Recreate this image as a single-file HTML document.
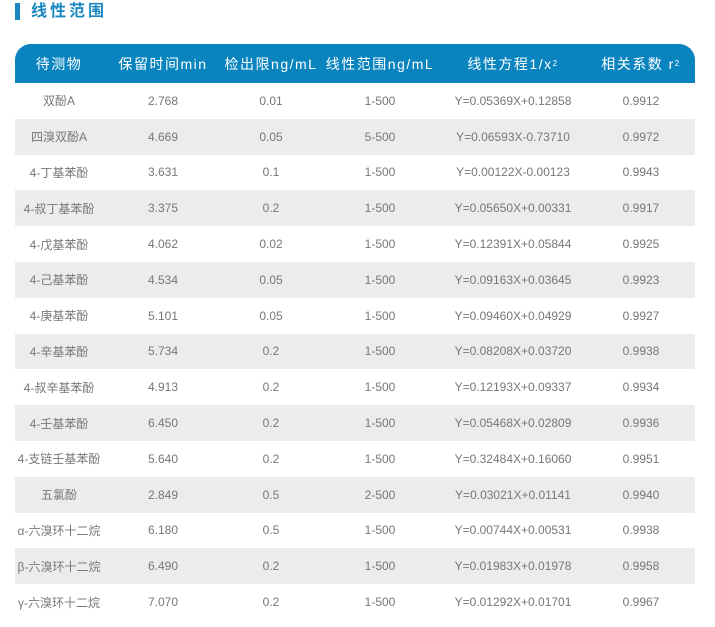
<!DOCTYPE html>
<html><head><meta charset="utf-8"><style>
body{margin:0;background:#fff;width:715px;height:627px;overflow:hidden;font-family:"Liberation Sans","Noto Sans CJK SC",sans-serif;}
.bar{position:absolute;left:15px;top:3px;width:5px;height:17px;background:#1a87c1;}
.title{position:absolute;left:31px;top:2px;font-size:16px;font-weight:bold;color:#1a87c1;letter-spacing:3px;line-height:20px;}
.hd{position:absolute;left:15px;top:44px;width:680px;height:39px;background:#0a84bf;border-radius:16px 16px 0 0;}
.row{position:absolute;left:15px;width:680px;height:35.8px;}
.c{position:absolute;top:0;height:100%;display:flex;align-items:center;justify-content:center;transform:translateX(-50%);white-space:nowrap;}
.hd .c{color:#fff;font-size:14px;letter-spacing:1.5px;}
.row .c{color:#777;font-size:12px;}
.g{background:#ececec;}
sup{font-size:8px;vertical-align:6px;}
</style></head><body>
<div class="bar"></div><div class="title">线性范围</div>
<div class="hd">
<div class="c" style="left:44px">待测物</div>
<div class="c" style="left:148px">保留时间min</div>
<div class="c" style="left:256px">检出限ng/mL</div>
<div class="c" style="left:365px">线性范围ng/mL</div>
<div class="c" style="left:498px">线性方程1/x<sup>2</sup></div>
<div class="c" style="left:626px">相关系数 r<sup>2</sup></div>
</div>
<div id="rows"></div>
<script>
var d=[["双酚A","2.768","0.01","1-500","Y=0.05369X+0.12858","0.9912"],
["四溴双酚A","4.669","0.05","5-500","Y=0.06593X-0.73710","0.9972"],
["4-丁基苯酚","3.631","0.1","1-500","Y=0.00122X-0.00123","0.9943"],
["4-叔丁基苯酚","3.375","0.2","1-500","Y=0.05650X+0.00331","0.9917"],
["4-戊基苯酚","4.062","0.02","1-500","Y=0.12391X+0.05844","0.9925"],
["4-己基苯酚","4.534","0.05","1-500","Y=0.09163X+0.03645","0.9923"],
["4-庚基苯酚","5.101","0.05","1-500","Y=0.09460X+0.04929","0.9927"],
["4-辛基苯酚","5.734","0.2","1-500","Y=0.08208X+0.03720","0.9938"],
["4-叔辛基苯酚","4.913","0.2","1-500","Y=0.12193X+0.09337","0.9934"],
["4-壬基苯酚","6.450","0.2","1-500","Y=0.05468X+0.02809","0.9936"],
["4-支链壬基苯酚","5.640","0.2","1-500","Y=0.32484X+0.16060","0.9951"],
["五氯酚","2.849","0.5","2-500","Y=0.03021X+0.01141","0.9940"],
["α-六溴环十二烷","6.180","0.5","1-500","Y=0.00744X+0.00531","0.9938"],
["β-六溴环十二烷","6.490","0.2","1-500","Y=0.01983X+0.01978","0.9958"],
["γ-六溴环十二烷","7.070","0.2","1-500","Y=0.01292X+0.01701","0.9967"]];
var x=[44,148,256,365,498,626],h="";
d.forEach(function(r,i){h+='<div class="row'+(i%2?' g':'')+'" style="top:'+(83+i*35.8)+'px">';
r.forEach(function(t,j){h+='<div class="c" style="left:'+x[j]+'px">'+t+'</div>';});h+='</div>';});
document.getElementById("rows").innerHTML=h;
</script>
</body></html>
